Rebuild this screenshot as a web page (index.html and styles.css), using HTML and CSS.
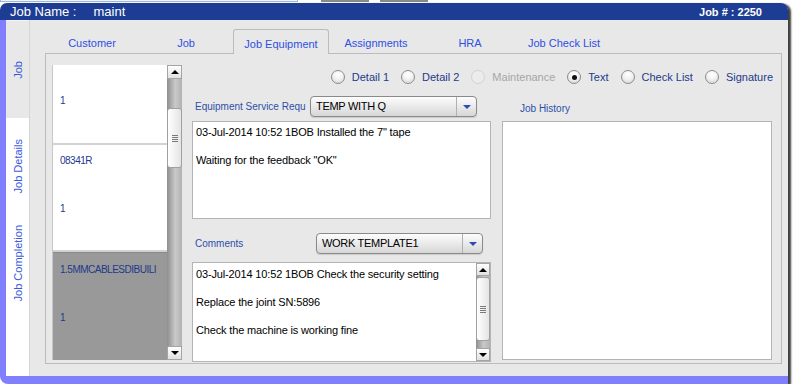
FILE: index.html
```html
<!DOCTYPE html>
<html lang="en">
<head>
  <meta charset="UTF-8">
  <title>Job Equipment</title>
  <link rel="stylesheet" href="styles.css">
</head>
<body>
  <div class="topstrip">
    <div class="tb-field"></div>
    <div class="tb-btn first"></div>
    <div class="tb-btn"></div>
  </div>

  <div class="window">
    <div class="titlebar">
      <div class="job-name">Job Name :<span class="value">maint</span></div>
      <div class="job-no">Job # :&nbsp;2250</div>
    </div>

    <div class="frame">
      <div class="sidetabs">
        <div class="vtab job"><span>Job</span></div>
        <div class="vtab"><span>Job Details</span></div>
        <div class="vtab"><span>Job Completion</span></div>
      </div>

      <div class="main">
        <div class="tabs">
          <div class="tab">Customer</div>
          <div class="tab">Job</div>
          <div class="tab active">Job Equipment</div>
          <div class="tab">Assignments</div>
          <div class="tab">HRA</div>
          <div class="tab">Job Check List</div>
        </div>

        <div class="panel">
          <!-- equipment list -->
          <div class="list-wrap">
            <div class="list">
              <div class="item first"><p>1</p></div>
              <div class="item second">
                <p>08341R</p>
                <p>1</p>
              </div>
              <div class="item selected">
                <p>1.5MMCABLESDIBUILI</p>
                <p>1</p>
              </div>
            </div>
            <div class="vscroll">
              <div class="sb-btn up"></div>
              <div class="sb-thumb"></div>
              <div class="sb-space"></div>
              <div class="sb-btn down"></div>
            </div>
          </div>

          <div class="right">
            <div class="radios">
              <div class="radio"><i></i>Detail 1</div>
              <div class="radio"><i></i>Detail 2</div>
              <div class="radio disabled"><i></i>Maintenance</div>
              <div class="radio checked"><i></i>Text</div>
              <div class="radio"><i></i>Check List</div>
              <div class="radio"><i></i>Signature</div>
            </div>

            <div class="columns">
              <div class="col-left">
                <div class="field-row">
                  <span class="label">Equipment Service Requ</span>
                  <div class="select equip">
                    <span class="select-value">TEMP WITH Q</span>
                    <span class="select-arrow"></span>
                  </div>
                </div>
                <div class="memo">
                  <p>03-Jul-2014 10:52 1BOB Installed the 7" tape</p>
                  <p>Waiting for the feedback "OK"</p>
                </div>

                <div class="field-row comments">
                  <span class="label">Comments</span>
                  <div class="select work">
                    <span class="select-value">WORK TEMPLATE1</span>
                    <span class="select-arrow"></span>
                  </div>
                </div>
                <div class="memo scrolling">
                  <div class="memo-text">
                    <p>03-Jul-2014 10:52 1BOB Check the security setting</p>
                    <p>Replace the joint SN:5896</p>
                    <p>Check the machine is working fine</p>
                  </div>
                  <div class="vscroll small">
                    <div class="sb-btn up"></div>
                    <div class="sb-thumb"></div>
                    <div class="sb-space"></div>
                    <div class="sb-btn down"></div>
                  </div>
                </div>
              </div>

              <div class="col-right">
                <div class="history-label"><span class="label">Job History</span></div>
                <div class="history-box"></div>
              </div>
            </div>
          </div>
        </div>
      </div>
    </div>
  </div>
</body>
</html>
```

FILE: styles.css
```css
body {
  margin: 0;
  width: 794px;
  height: 384px;
  overflow: hidden;
  background: #fff;
  font-family: 'Liberation Sans', Arial, sans-serif;
}

p {
  margin: 0;
}

/* strip of the page above the window */
.topstrip {
  height: 3px;
  display: flex;
  align-items: flex-start;
  overflow: hidden;
}

.tb-field {
  width: 296px;
  height: 1px;
  border: 1px solid #9ab8d8;
  border-top: none;
  background: #f4f4f4;
}

.tb-btn {
  width: 48px;
  height: 2px;
  margin-left: 11px;
  background: #8a8a8a;
}

.tb-btn.first {
  margin-left: 23px;
}

/* window */
.window {
  width: 788px;
  height: 381px;
  display: flex;
  flex-direction: column;
  border-radius: 8px 8px 0 0;
  box-shadow: 3px 1px 2px rgba(0, 0, 0, 0.75);
}

.titlebar {
  height: 17px;
  flex: none;
  display: flex;
  align-items: center;
  justify-content: space-between;
  padding: 0 26px 0 10px;
  background: #1d3c94;
  color: #fff;
  border-radius: 7px 7px 0 0;
}

.job-name {
  font-size: 13px;
}

.job-name .value {
  margin-left: 17px;
}

.job-no {
  font-size: 11px;
  font-weight: bold;
}

.frame {
  flex: 1;
  min-height: 0;
  display: flex;
  background: #e8e8e8;
  border-left: 6px solid #8080ff;
  border-bottom: 8px solid #8080ff;
  border-bottom-left-radius: 8px;
}

/* vertical tabs on the left */
.sidetabs {
  width: 24px;
  box-sizing: border-box;
  display: flex;
  flex-direction: column;
  background: #fff;
  border-right: 1px solid #d6d6d6;
}

.vtab {
  height: 97px;
  flex: none;
  display: flex;
  align-items: center;
  justify-content: center;
  color: #3a58e0;
  font-size: 11px;
}

.vtab span {
  writing-mode: vertical-rl;
  transform: rotate(180deg);
}

.vtab.job {
  height: 98px;
  box-sizing: border-box;
  background: #e8e8e8;
  border-top: 1px solid #f4f4f4;
}

.main {
  flex: 1;
  display: flex;
  flex-direction: column;
  padding: 9px 6px 12px 15px;
}

/* top tabs */
.tabs {
  height: 24px;
  flex: none;
  display: flex;
}

.tab {
  width: 94px;
  box-sizing: border-box;
  display: flex;
  justify-content: center;
  align-items: center;
  padding-top: 4px;
  font-size: 11px;
  color: #2e4fe4;
}

.tab.active {
  width: 96px;
  height: 25px;
  position: relative;
  z-index: 1;
  background: #e8e8e8;
  border: 1px solid #bcbcbc;
  border-bottom: none;
  border-radius: 3px 3px 0 0;
  padding-top: 3px;
}

.panel {
  flex: 1;
  display: flex;
  gap: 10px;
  padding: 11px 9px 0 6px;
  border: 1px solid #bcbcbc;
}

/* equipment list */
.list-wrap {
  width: 130px;
  height: 295px;
  flex: none;
  display: flex;
}

.list {
  flex: 1;
  min-width: 0;
  display: flex;
  flex-direction: column;
  background: #fff;
  border-left: 1px solid #c8c8c8;
}

.item {
  flex: none;
  padding-left: 7px;
  border-bottom: 2px solid #d2d2d2;
  color: #1d3a8c;
  font-size: 10px;
  line-height: 12px;
  letter-spacing: -0.5px;
  white-space: nowrap;
  overflow: hidden;
}

.item p + p {
  margin-top: 36px;
}

.item.first {
  height: 80px;
  box-sizing: border-box;
  padding-top: 30px;
}

.item.second {
  height: 107px;
  box-sizing: border-box;
  padding-top: 10px;
}

.item.selected {
  flex: 1;
  padding-top: 11px;
  background: #999;
  border-top: 1px solid #8a8a8a;
  border-bottom: none;
}

/* scrollbars */
.vscroll {
  width: 15px;
  flex: none;
  display: flex;
  flex-direction: column;
  background: linear-gradient(to right, #8e8e8e, #c9c9c9 55%, #b2b2b2);
}

.sb-btn {
  height: 14px;
  flex: none;
  box-sizing: border-box;
  display: flex;
  align-items: center;
  justify-content: center;
  background: linear-gradient(#fff, #e0e0e0);
  border: 1px solid #a4a4a4;
}

.sb-btn::before {
  content: "";
  border-left: 4px solid transparent;
  border-right: 4px solid transparent;
  border-bottom: 4px solid #000;
}

.sb-btn.down::before {
  border-bottom: none;
  border-top: 4px solid #000;
}

.sb-thumb {
  height: 60px;
  flex: none;
  margin-top: 29px;
  box-sizing: border-box;
  display: flex;
  align-items: center;
  justify-content: center;
  background: linear-gradient(to right, #fff, #e4e4e4);
  border: 1px solid #a0a0a0;
  border-radius: 3px;
}

.sb-thumb::before {
  content: "";
  width: 6px;
  height: 7px;
  background: repeating-linear-gradient(#7a7a7a 0 1px, transparent 1px 2px);
}

.sb-space {
  flex: 1;
}

.vscroll.small {
  width: 14px;
}

.vscroll.small .sb-btn {
  height: 13px;
}

.vscroll.small .sb-thumb {
  height: 64px;
  margin-top: 1px;
}

/* right side */
.right {
  flex: 1;
  display: flex;
  flex-direction: column;
}

.radios {
  height: 14px;
  margin-top: 5px;
  display: flex;
  justify-content: flex-end;
  align-items: center;
  gap: 12px;
  margin-right: -1px;
}

.radio {
  display: flex;
  align-items: center;
  gap: 7px;
  font-size: 11px;
  color: #1d3a8a;
}

.radio i {
  width: 14px;
  height: 14px;
  box-sizing: border-box;
  display: flex;
  align-items: center;
  justify-content: center;
  border-radius: 50%;
  border: 1px solid #8c8c8c;
  background: radial-gradient(circle at 50% 30%, #fff, #f2f2f2 45%, #cfcfcf);
}

.radio.checked i::after {
  content: "";
  width: 5px;
  height: 5px;
  border-radius: 50%;
  background: #111;
}

.radio.disabled {
  color: #a6a6a6;
}

.radio.disabled i {
  border-color: #d2d2d2;
  background: #ececec;
}

.columns {
  flex: 1;
  display: flex;
  gap: 11px;
  margin-top: 12px;
}

.col-left {
  width: 299px;
  display: flex;
  flex-direction: column;
}

.col-right {
  width: 270px;
  display: flex;
  flex-direction: column;
}

.label {
  font-size: 10px;
  color: #2d4fa8;
}

.field-row {
  height: 21px;
  flex: none;
  display: flex;
  align-items: center;
  justify-content: space-between;
  padding-left: 3px;
  padding-right: 14px;
}

.field-row.comments {
  margin-top: 14px;
  padding-right: 8px;
}

.select {
  width: 167px;
  height: 21px;
  box-sizing: border-box;
  display: flex;
  border: 1px solid #8a8a8a;
  border-radius: 4px;
  background: linear-gradient(#fdfdfd, #e6e6e6 60%, #d6d6d6);
  box-shadow: 0 1px 1px rgba(0, 0, 0, 0.12);
}

.select-value {
  flex: 1;
  padding-left: 5px;
  font-size: 11px;
  line-height: 19px;
  letter-spacing: -0.3px;
  color: #000;
}

.select-arrow {
  width: 19px;
  display: flex;
  align-items: center;
  justify-content: center;
  border-left: 1px solid #b0b0b0;
}

.select-arrow::before {
  content: "";
  border-left: 4px solid transparent;
  border-right: 4px solid transparent;
  border-top: 4px solid #2a4bb8;
}

.memo {
  height: 98px;
  flex: none;
  box-sizing: border-box;
  margin-top: 4px;
  padding: 3px 3px;
  background: #fff;
  border: 1px solid #b4b4b4;
  font-size: 11px;
  line-height: 14px;
  letter-spacing: -0.15px;
  color: #000;
}

.memo p {
  margin-bottom: 14px;
}

.memo.scrolling {
  height: 100px;
  margin-top: 8px;
  padding: 0;
  display: flex;
}

.memo-text {
  flex: 1;
  padding: 4px 3px 3px;
}

.history-label {
  height: 21px;
  flex: none;
  padding: 2px 0 0 18px;
  box-sizing: border-box;
}

.history-box {
  height: 239px;
  margin-top: 4px;
  box-sizing: border-box;
  background: #fff;
  border: 1px solid #b4b4b4;
}
```
